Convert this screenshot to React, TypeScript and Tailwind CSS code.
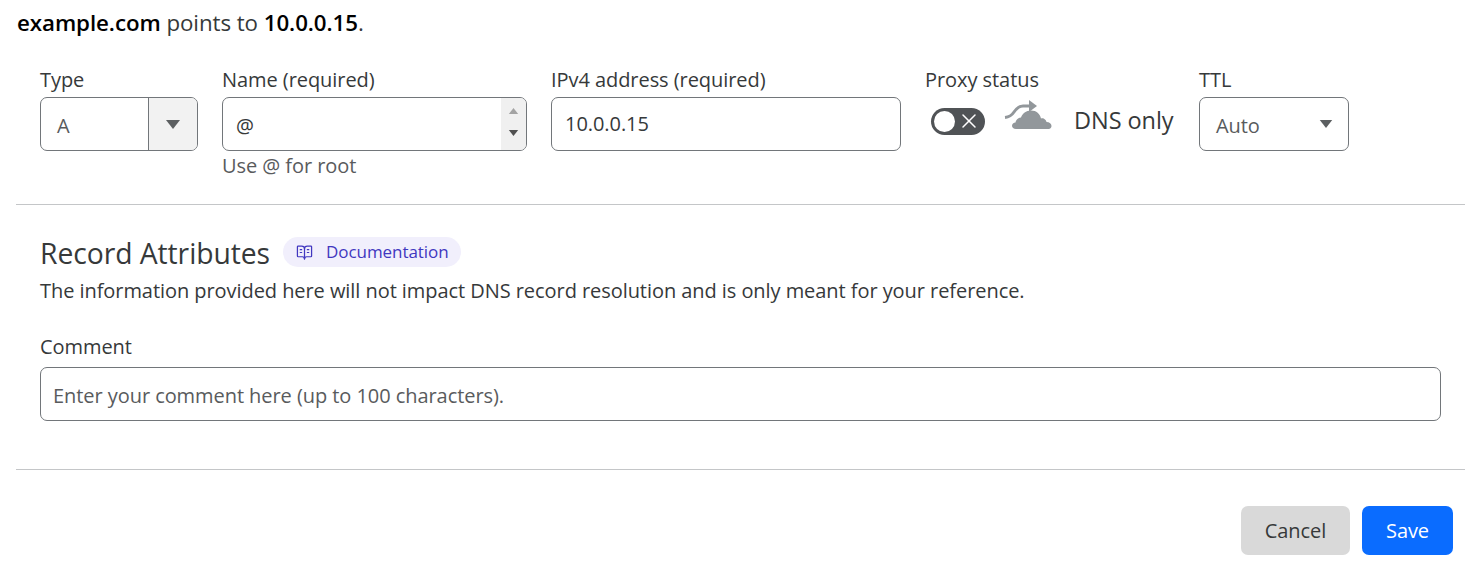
import { BookOpenText, X } from 'lucide-react';

function Caret({ className }: { className: string }) {
  return (
    <svg viewBox="0 0 14 9" className={className} aria-hidden="true">
      <path d="M0 0h14L7 9z" fill="currentColor" />
    </svg>
  );
}

function Field({ label, width, children }: { label: string; width: string; children: React.ReactNode }) {
  return (
    <div className={`flex flex-col ${width}`}>
      <label className="h-[30px] leading-[26px] text-[#36393a]">{label}</label>
      {children}
    </div>
  );
}

const inputBox = 'h-[54px] rounded-[7px] border border-[#72767a] bg-white';

function ProxyCloud() {
  return (
    <svg viewBox="0 0 50 32" className="h-[32px] w-[50px]" aria-hidden="true">
      <path d="M1 18.500C6 18 8 16 10 13c3-4.500 5-6 9-6h7" fill="none" stroke="#92979b" strokeWidth="3" />
      <path d="M25 1l8 6-8 6z" fill="#92979b" />
      <path d="M12 30c-2.500 0-4-1.500-4-3.200 0-2 1.500-3.300 3.500-3.300.5-3 3-5 5.500-5 1.500-4 5-7 10-7 5.500 0 9 3.500 10 8 1-.3 2-.3 3 .2 1.500.7 2.300 2 2.500 3.200 3 0 5 1.800 5 4 0 1.500-1 3.100-3 3.100z" fill="#92979b" />
    </svg>
  );
}

export default function App() {
  return (
    <div className="h-[565px] w-[1470px] overflow-hidden bg-white font-['Open_Sans','Noto_Sans',sans-serif] text-[20px] tracking-[-0.06px] text-[#36393a]">
      <p className="ml-[17px] h-[67px] pt-[8px] text-[22.3px] leading-[30px]">
        <strong className="font-semibold text-black">example.com</strong> points to{' '}
        <strong className="font-semibold text-black">10.0.0.15</strong>.
      </p>

      <div className="flex h-[137px] gap-[24px] pl-[40px]">
        <Field label="Type" width="w-[158px]">
          <div className={`flex overflow-hidden ${inputBox}`}>
            <span className="flex-1 pl-[16px] leading-[56px] text-[#595b5d]">A</span>
            <span className="flex w-[49px] items-center justify-center border-l border-[#72767a] bg-[#f2f2f2] text-[#5c5f61]">
              <Caret className="h-[9px] w-[14px]" />
            </span>
          </div>
        </Field>

        <Field label="Name (required)" width="w-[305px]">
          <div className={`flex overflow-hidden ${inputBox}`}>
            <span className="flex-1 pl-[13px] leading-[56px] text-[#36393a]">@</span>
            <span className="flex w-[25px] flex-col items-center justify-center gap-[16px] bg-[#f0f0f0] pb-[4px]">
              <Caret className="h-[6px] w-[11px] rotate-180 text-[#a3a3a3]" />
              <Caret className="h-[6px] w-[11px] text-[#505050]" />
            </span>
          </div>
          <span className="leading-[30px] text-[#595b5d]">Use @ for root</span>
        </Field>

        <Field label="IPv4 address (required)" width="w-[350px]">
          <div className={`pl-[13px] leading-[52px] text-[#36393a] ${inputBox}`}>10.0.0.15</div>
        </Field>

        <Field label="Proxy status" width="w-[250px]">
          <div className="flex h-[44px] items-center pl-[6px]">
            <span className="mt-[4px] flex h-[27px] w-[54px] items-center justify-between rounded-full bg-[#505356] pl-[3px] pr-[4px]">
              <span className="h-[21px] w-[21px] rounded-full bg-white" />
              <X className="h-[24px] w-[24px] text-white" strokeWidth={1.5} />
            </span>
            <span className="mb-[8px] ml-[19px]"><ProxyCloud /></span>
            <span className="ml-[20px] pt-[3px] text-[23.5px] text-[#36393a]">DNS only</span>
          </div>
        </Field>

        <Field label="TTL" width="w-[150px]">
          <div className={`flex items-center justify-between pl-[16px] pr-[15px] ${inputBox}`}>
            <span className="pt-[4px] text-[#595b5d]">Auto</span>
            <Caret className="h-[8px] w-[14px] text-[#5c5f61]" />
          </div>
        </Field>
      </div>

      <div className="mx-[16px] w-[1449px] border-t border-[#c4c6c8]" />

      <div className="px-[40px]">
        <div className="flex h-[66px] items-center gap-[13px] pt-[30px]">
          <h2 className="text-[28.3px] font-normal text-[#36393a]">Record Attributes</h2>
          <a className="mb-[2px] flex h-[30px] w-[178px] items-center gap-[13px] rounded-full bg-[#f1effc] pl-[13px] text-[17px] text-[#4137c0]">
            <BookOpenText className="h-[17px] w-[17px]" strokeWidth={1.75} />
            Documentation
          </a>
        </div>
        <p className="h-[59px] pt-[4px] leading-[32px] text-[#36393a]">
          The information provided here will not impact DNS record resolution and is only meant for your reference.
        </p>
        <label className="block h-[27px] pt-[1px] leading-[32px] text-[#36393a]">Comment</label>
        <div className="mt-[10px] h-[54px] w-[1401px] rounded-[7px] border border-[#72767a] pl-[12px] leading-[56px] text-[#595b5d]">
          Enter your comment here (up to 100 characters).
        </div>
      </div>

      <div className="mx-[16px] mt-[48px] w-[1449px] border-t border-[#c4c6c8]" />

      <div className="mt-[36px] flex justify-end gap-[12px] pr-[17px]">
        <button className="h-[49px] w-[109px] rounded-[7px] bg-[#d9d9d9] text-[#36393a]">Cancel</button>
        <button className="h-[49px] w-[91px] rounded-[7px] bg-[#0a6cff] text-white">Save</button>
      </div>
    </div>
  );
}
